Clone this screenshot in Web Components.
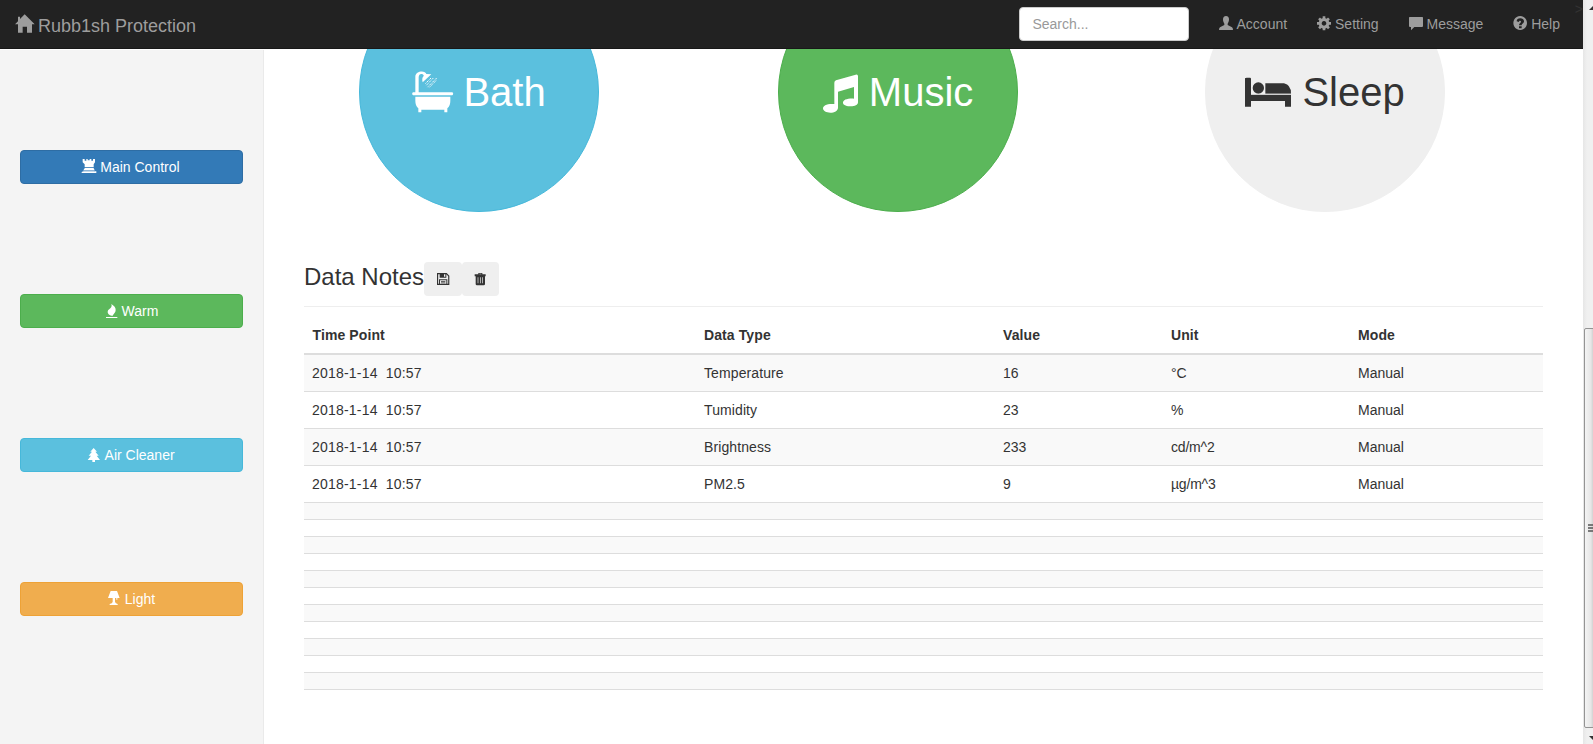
<!DOCTYPE html>
<html lang="en">
<head>
<meta charset="utf-8">
<title>Rubb1sh Protection</title>
<style>
html,body{margin:0;height:100%;overflow:hidden;background:#fff}
body{font:14px/20px "Liberation Sans",Arial,sans-serif;color:#333}
</style>
</head>
<body>
<home-dashboard></home-dashboard>
<script>
const define = (tag, html, setup) => customElements.define(tag, class extends HTMLElement {
  connectedCallback() {
    if (this.shadowRoot) return;
    const t = document.createElement('template');
    t.innerHTML = html;
    this.attachShadow({mode: 'open'}).append(t.content.cloneNode(true));
    if (setup) setup(this, this.shadowRoot);
  }
});

/* name: [width px, height px, viewBox, markup] */
const ICONS = {
  home: [18,18,'45 46 54 54','<path d="M74 44 104 74H96V99H81V81H68V99H54V74H45L54 65V51H60V58Z"/>'],
  user: [14,14,'54 33 42 42','<path d="M75 33c6 0 9 4 9 10 0 6-2 10-4 13v4l13 7q3 2 3 8H54q0-6 3-8l13-7v-4c-2-3-4-7-4-13 0-6 3-10 9-10z"/>'],
  cog: [14,14,'351 33 42 42','<path fill-rule="evenodd" d="M372 39a16 16 0 1 0 .01 0zM372 48a7 7 0 1 1-.01 0z"/><path d="M368 34h8v8h-8zM368 68h8v8h-8zM351 51h8v8h-8zM385 51h8v8h-8z"/><path transform="rotate(45 372 55)" d="M368 34h8v8h-8zM368 68h8v8h-8zM351 51h8v8h-8zM385 51h8v8h-8z"/>'],
  comment: [14,14,'627 33 42 42','<path d="M629 36H667q2 0 2 2V63q0 3-3 3H643L633 76V66H630q-3 0-3-3V38q0-2 2-2Z"/>'],
  help: [14,14,'942 33 42 42','<path fill-rule="evenodd" d="M963.500 33a20.500 21 0 1 0 .01 0zM953 49c0-6 4-9 11-9 6 0 11 3 11 9 0 7-7 7-7 12h-8c0-7 6-7 6-11 0-2-1-3-3-3s-3 1-3 4zM960 64h8v6h-8z"/>'],
  tower: [14,14,'248 477 42 42','<path d="M250 477H256V482H261V477H265V481H271V477H276V482H281V477H287V487L283 493V505L286 511V514H291V519H247V516L252 514V511L256 505V493L250 487Z"/><path stroke="#337ab7" stroke-width="2.500" d="M254 502.500H284M251 512.500H287"/>'],
  fire: [14,14,'312 69 42 42','<path d="M334 72C343 78 347 83 347 90C347 98 341 101 338 107C331 107 323 103 323 95C323 89 331 87 334 81Q336 77 334 72Z"/><rect x="318" y="111" width="34" height="3"/>'],
  tree: [14,14,'262 501 42 42','<path d="M282 504 292 515H287L297 527H291L301 540H286V546H278V540H264L274 527H267L277 515H272Z"/>'],
  lamp: [14,14,'322 63 42 42','<path d="M333 63H352L360 84H353V89H350V84H346V96Q348 100 354 102V105H330V102Q338 100 339 96V84H325Z"/>'],
  bath: [40,40,'185 94 120 120','<path d="M195 157V108C195 90 225 88 228 100L243 101 217 125C215 117 215 111 220 106V104C216 97 205 98 205 110V157Z"/><rect x="186" y="155" width="122" height="9" rx="3"/><path d="M195 168H300V180Q300 196 291 203V215H282V207H213V215H204V203Q195 196 195 180Z"/><path fill="none" stroke="currentColor" stroke-width="3" stroke-dasharray="4 2.500" d="M242 112 224 130M249 112 228 134M259 112 231 140M258 119 237 140"/>'],
  music: [37,40,'159 94 111 120','<path d="M198 119 257 102Q264 100 264 107V185C264 193 254 197 243 197S219 194 219 186 231 173 252 174V139L204 153V201C204 210 193 216 181 216S159 211 159 203 171 188 193 190V126Q193 121 198 119Z"/>'],
  bed: [46,40,'150 94 138 120','<path d="M150 113Q151 111 155 111H165Q168 111 168 115V160H288V198H270V181H168V198H150Z"/><circle cx="190" cy="142" r="17"/><path d="M211 128H267Q288 132 288 159H211Z"/><path stroke="#efefef" stroke-width="3" d="M168 161H288"/>'],
  save: [12,12,'440 69 36 36','<path fill-rule="evenodd" d="M440 69H469L477 77V105H440ZM443.500 72.500V101.500H446V88H471V101.500H473.500V78.500L468 72.500V83H448V72.500ZM461 72.500V80H465V72.500ZM449 91V101.500H468V91Z"/><path d="M452 93H465V95H452zM452 97.500H465V99.500H452z"/>'],
  trash: [12,12,'553 69 36 36','<path fill-rule="evenodd" d="M566 73V69H578V73H588V79H586V102Q586 106 582 106H562Q558 106 558 102V79H555V73ZM569 71V73H575V71ZM564 82V100H566V82ZM571 82V100H573V82ZM578 82V100H580V82Z"/>']
};
define('glyph-icon', '<style>:host{display:inline-block}svg{display:block;overflow:visible;fill:currentColor}</style><span></span>', (el, r) => {
  const [w, h, box, body] = ICONS[el.getAttribute('name')];
  el.style.width = w + 'px'; el.style.height = h + 'px';
  r.querySelector('span').innerHTML = `<svg width="${w}" height="${h}" viewBox="${box}" aria-hidden="true">${body}</svg>`;
});
const fillIcon = (el, r) => {
  r.querySelector('.i').innerHTML = `<glyph-icon name="${el.getAttribute('icon')}"></glyph-icon>`;
};

define('nav-link', `<style>:host{display:block;padding:14px 15px;white-space:nowrap;color:#9d9d9d}
glyph-icon{vertical-align:-1px}</style><span class="i"></span> <slot></slot>`, fillIcon);

define('top-bar', `<style>
:host{display:flex;position:relative;box-sizing:border-box;height:49px;background:#222;border-bottom:1px solid #181818;color:#9d9d9d;padding-right:8px}
.brand{font-size:18px;padding:15px 0 0 15px;margin-right:auto;white-space:nowrap}
.brand glyph-icon{vertical-align:-1px}
.search{box-sizing:border-box;width:170px;height:34px;margin-top:7px;padding:6px 12px;background:#fff;border:1px solid #ccc;border-radius:4px;color:#999}
nav{display:flex;padding-left:15px}
.stray{position:absolute;right:0;top:-1px;color:#333}
</style><div class="brand"><glyph-icon name="home"></glyph-icon> Rubb1sh Protection</div>
<div class="search">Search...</div>
<nav><nav-link icon="user">Account</nav-link><nav-link icon="cog">Setting</nav-link><nav-link icon="comment">Message</nav-link><nav-link icon="help">Help</nav-link></nav><span class="stray">&gt;</span>`);

define('side-button', `<style>:host{display:block;box-sizing:border-box;height:34px;padding:6px 13px 6px 12px;border:1px solid;border-radius:4px;color:#fff;text-align:center;white-space:nowrap}
:host([kind=primary]){background:#337ab7;border-color:#2e6da4}
:host([kind=success]){background:#5cb85c;border-color:#4cae4c}
:host([kind=info]){background:#5bc0de;border-color:#46b8da}
:host([kind=warning]){background:#f0ad4e;border-color:#eea236}
glyph-icon{vertical-align:-1px}</style><span class="i"></span> <slot></slot>`, fillIcon);

define('side-bar', `<style>:host{display:flex;flex-direction:column;gap:110px;box-sizing:border-box;width:264px;margin-top:1px;padding:100px 20px 0;background:#f4f4f4;border-right:1px solid #eaeaea}</style>
<side-button kind="primary" icon="tower">Main Control</side-button><side-button kind="success" icon="fire">Warm</side-button><side-button kind="info" icon="tree">Air Cleaner</side-button><side-button kind="warning" icon="lamp">Light</side-button>`);

define('mode-circle', `<style>:host{display:flex;align-items:center;justify-content:center;box-sizing:border-box;width:240px;height:240px;border:1px solid;border-radius:50%;font-size:40px;line-height:56px;color:#fff;white-space:nowrap}
:host([kind=info]){background:#5bc0de;border-color:#46b8da}
:host([kind=success]){background:#5cb85c;border-color:#4cae4c}
:host([kind=success]) div{word-spacing:-2px}
:host([kind=plain]){background:#efefef;border-color:#efefef;color:#333}
glyph-icon{vertical-align:-6px}</style><div><span class="i"></span> <slot></slot></div>`, fillIcon);

define('tool-button', `<style>:host{display:flex;align-items:center;justify-content:center;box-sizing:border-box;width:37.500px;height:34px;border-radius:4px;background:#efefef;color:#333}glyph-icon{display:block}</style><span class="i"></span>`, fillIcon);

define('data-table', `<style>:host{display:block}
.row{display:grid;grid-template-columns:392px 299px 168px 187px 1fr;box-sizing:border-box;height:37px;padding:8px 0;border-bottom:1px solid #ddd;white-space:pre}
.row span{padding-left:8px}
.head{height:39px;padding:9px 0 8px;border-bottom-width:2px;font-weight:bold}
.head span{letter-spacing:.1px}
.head span:first-child{padding-left:8.500px}
.row:not(.head) span:first-child{letter-spacing:.2px}
.row:not(.head) span:nth-child(2){letter-spacing:.1px}
.row:not(.head) span:nth-child(4){letter-spacing:-.2px}
.odd{background:#f9f9f9}.empty{height:17px}
</style><div class="row head"><span>Time Point</span><span>Data Type</span><span>Value</span><span>Unit</span><span>Mode</span></div>`,
  (el, r) => {
    const rows = [['Temperature','16','°C'],['Tumidity','23','%'],['Brightness','233','cd/m^2'],['PM2.5','9','µg/m^3']];
    for (let i = 0; i < 15; i++) {
      const d = document.createElement('div');
      d.className = 'row' + (i % 2 ? '' : ' odd') + (i > 3 ? ' empty' : '');
      if (rows[i]) for (const c of ['2018-1-14\u00a0 10:57', ...rows[i], 'Manual']) {
        const s = document.createElement('span'); s.textContent = c; d.append(s);
      }
      r.append(d);
    }
  });

define('main-panel', `<style>:host{display:block;flex:1;min-width:0;overflow:hidden;padding:0 40px}
.modes{display:flex;margin-top:-77px;padding-left:55px}
.modes :nth-child(2){margin-left:179px}.modes :nth-child(3){margin-left:187px}
header{display:flex;margin-top:50px;height:44px;border-bottom:1px solid #eee;margin-bottom:9px}
h2{margin:0;font-size:24px;font-weight:400;line-height:30px;width:120px;white-space:nowrap}
</style><div class="modes"><mode-circle kind="info" icon="bath">Bath</mode-circle><mode-circle kind="success" icon="music">Music</mode-circle><mode-circle kind="plain" icon="bed">Sleep</mode-circle></div>
<header><h2>Data Notes</h2><tool-button icon="save"></tool-button><tool-button icon="trash"></tool-button></header><data-table></data-table>`);

define('scroll-rail', `<style>:host{display:block;box-sizing:border-box;width:10px;height:744px;padding-left:1px;overflow:hidden;background:linear-gradient(90deg,#e6e6e6,#f0f0f0 4px,#f0f0f0)}svg{display:block}</style>
<svg width="9" height="744"><defs><linearGradient id="g"><stop offset="0" stop-color="#f5f5f5"/><stop offset=".4" stop-color="#e6e6e6"/><stop offset=".5" stop-color="#d6d6d6"/><stop offset="1" stop-color="#cfcfcf"/></linearGradient></defs>
<rect x=".5" y="328.500" width="16" height="399" rx="1.500" fill="url(#g)" stroke="#949494"/>
<path d="M4 525H9M4 528H9M4 531H9" stroke="#555" stroke-width="1.500"/><path d="M5 10 9 6V10ZM5 736H9V740Z" fill="#333"/></svg>`);

define('home-dashboard', `<style>:host{display:flex;height:744px;width:1593px;overflow:hidden}
.page{display:flex;flex-direction:column;flex:1;min-width:0}.body{display:flex;flex:1;min-height:0}
top-bar{z-index:1}</style>
<div class="page"><top-bar></top-bar><div class="body"><side-bar></side-bar><main-panel></main-panel></div></div><scroll-rail></scroll-rail>`);
</script>
</body>
</html>
